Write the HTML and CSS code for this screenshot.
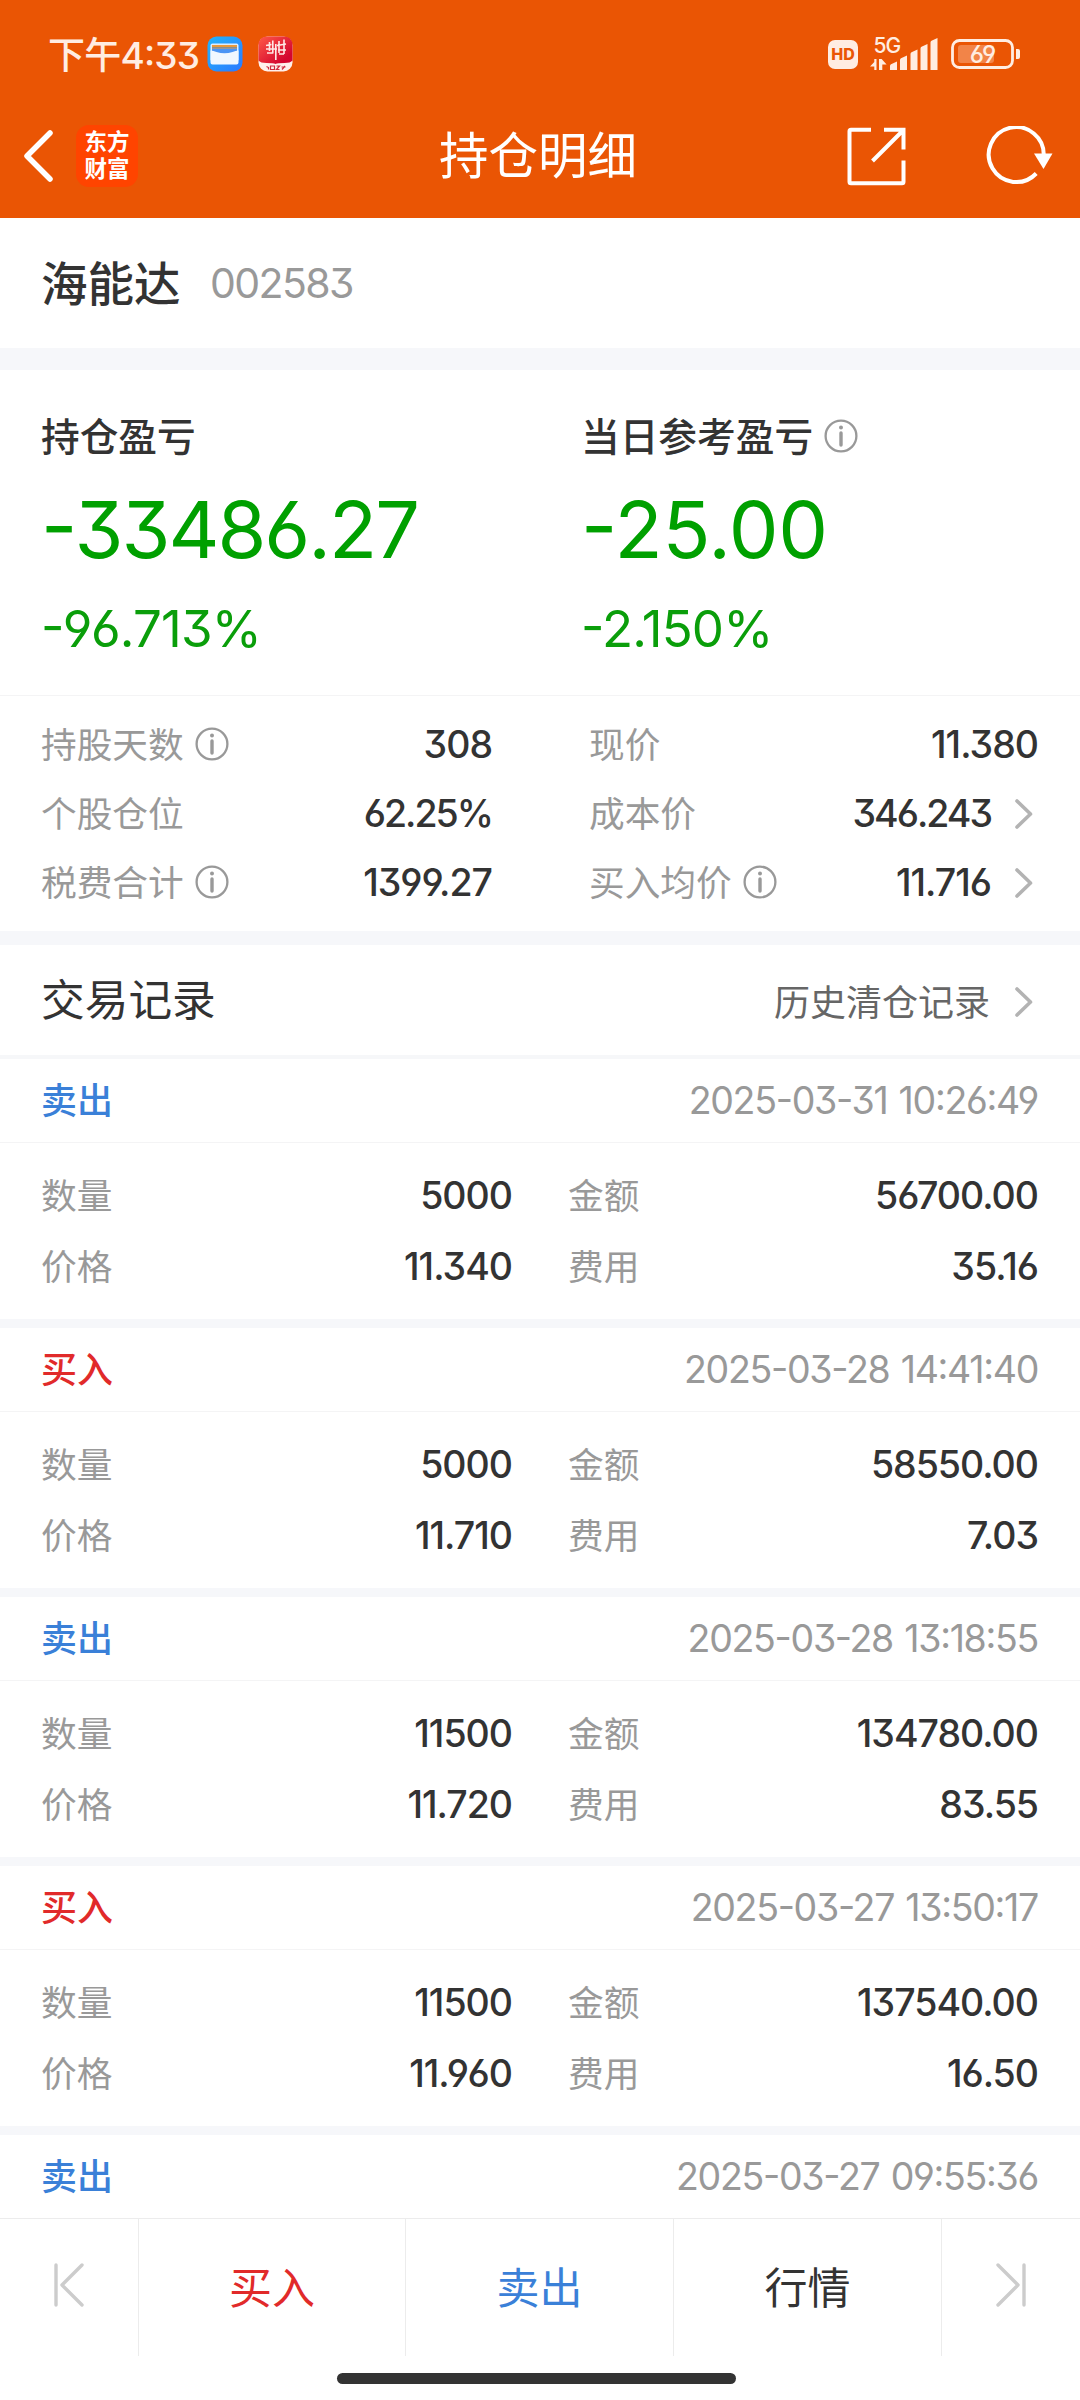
FILE: index.html
```html
<!DOCTYPE html>
<html lang="zh-CN">

<head>
    <meta charset="UTF-8">
    <meta name="viewport" content="width=device-width, initial-scale=1.0">
    <title>持仓明细</title>
    <link rel="stylesheet" href="styles.css">
</head>

<body>
    <svg class="symbols" width="0" height="0">
        <symbol id="info" viewBox="0 0 34 34">
            <circle cx="17" cy="17" r="15.4" fill="none" stroke="#999" stroke-width="2.3" />
            <circle cx="17" cy="8.6" r="2" fill="#999" />
            <path d="M17 14v12" stroke="#999" stroke-width="3.4" stroke-linecap="round" />
        </symbol>
        <symbol id="arrow" viewBox="0 0 18 30">
            <path d="M2 2l13.5 13L2 28" fill="none" stroke="#b3b3b3" stroke-width="3.6" stroke-linecap="round" stroke-linejoin="round" />
        </symbol>
    </svg>

    <div class="page">
        <header class="header">
            <div class="status">
                <span class="time">下午4:33</span>
                <svg width="36" height="36" viewBox="0 0 36 36">
                    <defs>
                        <linearGradient id="wallet" x1="0" y1="0" x2="1" y2="1">
                            <stop offset="0" stop-color="#22b4fb" />
                            <stop offset="1" stop-color="#2b78ff" />
                        </linearGradient>
                    </defs>
                    <rect x="0.5" y="0.5" width="35" height="35" rx="9" fill="url(#wallet)" />
                    <rect x="3.5" y="7.5" width="28" height="18" rx="2" fill="#dceeff" />
                    <rect x="5" y="9" width="25" height="5" fill="#e89a3c" />
                    <rect x="5" y="11" width="25" height="1" fill="#8b8f8a" />
                    <rect x="5" y="12.5" width="25" height="7" fill="#4a94f5" />
                    <path d="M3.5 14.5q3 .3 6 1.5q8 2.500 16 0q3-1.200 6-1.500v12q0 2-2 2h-24q-2 0-2-2z" fill="#f0f7ff" />
                </svg>
                <svg class="second" width="35" height="36" viewBox="0 0 35 36">
                    <defs>
                        <linearGradient id="redApp" x1="0" y1="0" x2="1" y2="1">
                            <stop offset="0" stop-color="#ff5a48" />
                            <stop offset="0.8" stop-color="#d4062f" />
                        </linearGradient>
                    </defs>
                    <rect x="0.5" y="0.5" width="34" height="35" rx="9" fill="#fff0ec" />
                    <path d="M.5 24.500V9.500q0-9 9-9h16q9 0 9 9v15q-2 2.500-8 2.500-7 0-9 1-2-1-9-1-6 0-8-2.500z" fill="url(#redApp)" />
                    <path d="M11.500 6v9M8 9.500l5.500-1M8 13h11M14.800 4.500v13M9 17h6M17.800 8v16M21 5v12M26 3.500V18M19 9.500l9-1.500M20 14h8M21 18h5" fill="none" stroke="#ffe9e6" stroke-width="1.600" />
                    <path d="M8.500 30.500l2 1v2M12.500 30h4v3.500h-4zM18.500 30h3l-3 3.500h3M23.500 31h4M24 33.500l3-3.500" fill="none" stroke="#cf2b3e" stroke-width="1.200" />
                </svg>

                <div class="statusRight">
                    <span class="hd">HD</span>
                    <svg width="70" height="40" viewBox="869 34 70 40">
                        <text class="net" x="873.5" y="52.5">5G</text>
                        <path d="M876.500 59v11h-2.200v-3.500h-4.300l4.300-4.500v-3zM879 70v-11h2.600l5 5.500h-4.300v5.500z" fill="#ffede2" />
                        <path d="M890 70v-4q0-1 1-1.800l6-2.700v8.500zM900 70v-10q0-1 1-1.800l6-2.700v14.500zM910.500 70v-16q0-1 1-1.800l6-2.700v20.500zM920.500 70V48.500q0-1 1-1.800l6-2.700v26zM930.500 70V42.500q0-1 1-1.800l6-2.700v32z" fill="#ffede2" />
                    </svg>
                    <svg class="battery" width="70" height="32" viewBox="951 38 70 32">
                        <rect x="952.5" y="40.5" width="60" height="27" rx="7" fill="none" stroke="#ffede2" stroke-width="2.8" />
                        <rect x="958" y="45" width="36" height="18" rx="3" fill="#f28448" />
                        <path d="M1016 49h2q2 0 2 2v6q0 2-2 2h-2z" fill="#ffede2" />
                        <text class="charge" x="982.5" y="63" text-anchor="middle">69</text>
                    </svg>
                </div>
            </div>

            <div class="nav">
                <div class="navLeft">
                    <svg width="32" height="54" viewBox="0 0 32 54">
                        <path d="M28 4L5 27l23 23" fill="none" stroke="#fff" stroke-width="5.5" stroke-linecap="round" stroke-linejoin="round" />
                    </svg>
                    <div class="logo"><span>东方</span><span>财富</span></div>
                </div>
                <h1 class="title">持仓明细</h1>
                <div class="navRight">
                    <svg width="60" height="60" viewBox="846 125 60 60">
                        <path d="M871 128.800h-20q-1.500 0-1.500 1.500v50.500q0 1.500 1.500 1.500h51q1.500 0 1.500-1.500V159.500M884 128.800h19.500V148.500M903 129.500L872.500 160" fill="none" stroke="#fff" stroke-width="4" />
                    </svg>
                    <svg width="68" height="60" viewBox="986 126 68 60">
                        <path d="M1043.700 156a27.500 27.500 0 1 0-7.500 17.500" fill="none" stroke="#fff" stroke-width="4" />
                        <path d="M1034 153.500h18.500L1043.500 169z" fill="#fff" />
                    </svg>
                </div>
            </div>
        </header>

        <div class="stock">
            <span class="stockName">海能达</span>
            <span class="stockCode">002583</span>
        </div>

        <section class="profit">
            <div class="profitCol">
                <div class="profitLabel"><span>持仓盈亏</span></div>
                <div class="profitValue">-33486.27</div>
                <div class="profitRate">-96.713%</div>
            </div>
            <div class="profitCol">
                <div class="profitLabel"><span>当日参考盈亏</span><svg class="info"><use href="#info" /></svg></div>
                <div class="profitValue wide">-25.00</div>
                <div class="profitRate">-2.150%</div>
            </div>
        </section>

        <section class="detail">
            <div class="detailCol">
                <div class="detailRow"><span class="label">持股天数</span><svg class="info"><use href="#info" /></svg><b>308</b></div>
                <div class="detailRow"><span class="label">个股仓位</span><b class="narrow">62.25%</b></div>
                <div class="detailRow"><span class="label">税费合计</span><svg class="info"><use href="#info" /></svg><b>1399.27</b></div>
            </div>
            <div class="detailCol">
                <div class="detailRow"><span class="label">现价</span><b>11.380</b></div>
                <div class="detailRow"><span class="label">成本价</span><b class="narrow">346.243</b><svg class="arrow"><use href="#arrow" /></svg></div>
                <div class="detailRow"><span class="label">买入均价</span><svg class="info"><use href="#info" /></svg><b>11.716</b><svg class="arrow"><use href="#arrow" /></svg></div>
            </div>
        </section>

        <div class="listTitle">
            <h2>交易记录</h2>
            <span class="history">历史清仓记录</span>
            <svg class="arrow"><use href="#arrow" /></svg>
        </div>

        <main class="list">
            <div class="record">
                <div class="recordHead"><span class="sell">卖出</span><time>2025-03-31 10:26:49</time></div>
                <div class="recordBody">
                    <span class="label">数量</span><b>5000</b><span class="label">金额</span><b>56700.00</b>
                    <span class="label">价格</span><b>11.340</b><span class="label">费用</span><b>35.16</b>
                </div>
            </div>
            <div class="record">
                <div class="recordHead"><span class="buy">买入</span><time>2025-03-28 14:41:40</time></div>
                <div class="recordBody">
                    <span class="label">数量</span><b>5000</b><span class="label">金额</span><b>58550.00</b>
                    <span class="label">价格</span><b>11.710</b><span class="label">费用</span><b>7.03</b>
                </div>
            </div>
            <div class="record">
                <div class="recordHead"><span class="sell">卖出</span><time>2025-03-28 13:18:55</time></div>
                <div class="recordBody">
                    <span class="label">数量</span><b>11500</b><span class="label">金额</span><b>134780.00</b>
                    <span class="label">价格</span><b>11.720</b><span class="label">费用</span><b>83.55</b>
                </div>
            </div>
            <div class="record">
                <div class="recordHead"><span class="buy">买入</span><time>2025-03-27 13:50:17</time></div>
                <div class="recordBody">
                    <span class="label">数量</span><b>11500</b><span class="label">金额</span><b>137540.00</b>
                    <span class="label">价格</span><b>11.960</b><span class="label">费用</span><b>16.50</b>
                </div>
            </div>
            <div class="record">
                <div class="recordHead"><span class="sell">卖出</span><time>2025-03-27 09:55:36</time></div>
            </div>
        </main>

        <footer class="tabs">
            <div class="tab">
                <svg width="32" height="46" viewBox="0 0 32 46">
                    <path d="M3 3v40M29 3L9 23l20 20" fill="none" stroke="#ccc" stroke-width="3.4" stroke-linecap="round" stroke-linejoin="round" />
                </svg>
            </div>
            <div class="tab buy">买入</div>
            <div class="tab sell">卖出</div>
            <div class="tab">行情</div>
            <div class="tab">
                <svg width="32" height="46" viewBox="0 0 32 46">
                    <path d="M29 3v40M3 3l20 20L3 43" fill="none" stroke="#ccc" stroke-width="3.4" stroke-linecap="round" stroke-linejoin="round" />
                </svg>
            </div>
        </footer>
        <div class="homeBar"></div>
    </div>
</body>

</html>
```
FILE: styles.css
```css
* {
    box-sizing: border-box;
}

body {
    margin: 0;
    background-color: #fff;
    color: #333;
    font-family: Inter, "Noto Sans CJK SC", sans-serif;
    font-feature-settings: "cv03", "cv04", "cv09", "case", "calt" 0;
}

h1,
h2 {
    margin: 0;
    font-weight: 400;
}

svg {
    display: block;
    flex: none;
}

.symbols {
    position: absolute;
}

.page {
    display: flex;
    flex-direction: column;
    width: 1080px;
    height: 2400px;
    overflow: hidden;
    white-space: nowrap;
}

/* header */
.header {
    flex: none;
    height: 218px;
    background-color: #ea5504;
    color: #fff;
}

.status {
    display: flex;
    align-items: center;
    height: 94px;
    padding: 14px 59px 0 48px;
    color: #ffede2;
}

.time {
    width: 159px;
    padding-bottom: 3px;
    font-size: 37px;
    font-weight: 500;
    letter-spacing: -0.8px;
}

.second {
    margin-left: 15px;
}

.statusRight {
    display: flex;
    align-items: center;
    margin-left: auto;
}

.hd {
    width: 30px;
    height: 29px;
    margin-right: 11px;
    border-radius: 7px;
    background-color: #ffede2;
    color: #ea5504;
    font-size: 16px;
    font-weight: 800;
    line-height: 29px;
    text-align: center;
}

.net {
    font-size: 21px;
    font-weight: 500;
    letter-spacing: -1px;
    fill: #ffede2;
}

.battery {
    margin-left: 12px;
}

.charge {
    font-size: 24px;
    font-weight: 500;
    letter-spacing: -1px;
    fill: #ffede2;
}

.nav {
    display: grid;
    grid-template-columns: 1fr auto 1fr;
    align-items: center;
    height: 124px;
    padding: 0 26px 1px 22px;
}

.navLeft,
.navRight {
    display: flex;
    align-items: center;
}

.navLeft {
    gap: 22px;
}

.navRight {
    justify-content: flex-end;
    gap: 80px;
}

.logo {
    display: flex;
    flex-direction: column;
    justify-content: center;
    align-items: center;
    width: 62px;
    height: 62px;
    padding-bottom: 2px;
    border-radius: 13px;
    background-color: #ff4400;
    font-size: 22.5px;
    font-weight: 700;
    line-height: 27px;
}

.title {
    padding-bottom: 6px;
    font-size: 49.5px;
}

/* stock name */
.stock {
    display: flex;
    flex: none;
    align-items: center;
    height: 152px;
    padding-left: 41px;
    border-bottom: 22px solid #f6f7fa;
}

.stockName {
    width: 169px;
    padding-bottom: 5px;
    font-size: 46.5px;
    font-weight: 500;
}

.stockCode {
    color: #999;
    font-size: 41px;
    letter-spacing: -1.6px;
}

/* profit and loss */
.profit {
    display: grid;
    flex: none;
    grid-template-columns: 540px 540px;
    height: 326px;
    padding-top: 39px;
    border-bottom: 1px solid #f4f4f5;
}

.profitCol {
    padding-left: 41px;
}

.profitLabel {
    display: flex;
    align-items: center;
    height: 54px;
    font-size: 38.7px;
    font-weight: 500;
}

.profitLabel span {
    padding-bottom: 4px;
}

.profitValue {
    height: 131px;
    color: #00a000;
    font-size: 79px;
    line-height: 132px;
    letter-spacing: -2px;
}

.profitValue.wide {
    letter-spacing: -0.2px;
}

.profitRate {
    color: #0a9e0a;
    font-size: 51px;
    line-height: 69px;
    letter-spacing: -0.8px;
}

.info {
    width: 34px;
    height: 34px;
    margin-left: 11px;
}

.arrow {
    width: 18px;
    height: 30px;
    margin-left: 24px;
}

/* position details */
.detail {
    display: flex;
    flex: none;
    justify-content: space-between;
    height: 249px;
    padding: 14px 42px 0 41px;
    border-bottom: 14px solid #f6f7fa;
}

.detailCol {
    width: 451px;
}

.detailCol:last-child {
    width: 449px;
}

.detailRow {
    display: flex;
    align-items: center;
    height: 69px;
}

.detailRow .info {
    margin-bottom: 1px;
}

.detailRow .arrow,
.listTitle .arrow {
    margin-right: 5px;
}

.label {
    padding-bottom: 4px;
    color: #999;
    font-size: 35.7px;
}

b {
    margin-left: auto;
    font-size: 37.5px;
    font-weight: 500;
    letter-spacing: -1px;
}

b.narrow {
    letter-spacing: -2px;
}

/* trade records */
.listTitle {
    display: flex;
    flex: none;
    align-items: center;
    height: 114px;
    padding: 0 42px 0 41px;
    border-bottom: 4px solid #f6f7f9;
}

.listTitle h2 {
    padding-bottom: 7px;
    font-size: 43.7px;
}

.listTitle .arrow {
    margin-top: 3px;
}

.history {
    margin-left: auto;
    margin-right: 1px;
    color: #666;
    font-size: 36px;
}

.list {
    flex: 1;
    overflow: hidden;
}

.record {
    height: 269px;
    border-bottom: 9px solid #f6f7fa;
}

.recordHead {
    display: flex;
    align-items: center;
    justify-content: space-between;
    height: 84px;
    padding: 0 42px 0 41px;
    border-bottom: 1px solid #f4f4f5;
    font-size: 36px;
    font-weight: 500;
}

.recordHead span {
    padding-bottom: 5px;
}

.recordHead time {
    color: #999;
    font-size: 37.5px;
    font-weight: 400;
    letter-spacing: -1.3px;
    word-spacing: 2px;
}

.recordBody {
    display: grid;
    grid-template-columns: 100px 371px 100px 1fr;
    grid-auto-rows: 71px;
    align-items: center;
    padding: 17px 42px 0 41px;
}

.recordBody .label:nth-child(4n + 3) {
    margin-left: 56px;
}

.buy {
    color: #e12a2a;
}

.sell {
    color: #3a80d8;
}

/* bottom bar */
.tabs {
    display: grid;
    flex: none;
    grid-template-columns: 139px 267px 268px 268px 1fr;
    height: 138px;
    border-top: 1px solid #ececec;
}

.tab {
    display: flex;
    align-items: center;
    justify-content: center;
    padding-bottom: 5px;
    border-right: 1px solid #ececec;
    font-size: 43px;
}

.tab:last-child {
    border-right: none;
}

.homeBar {
    flex: none;
    width: 399px;
    height: 11px;
    margin: 17px 0 16px 337px;
    border-radius: 6px;
    background-color: #333;
}
```
